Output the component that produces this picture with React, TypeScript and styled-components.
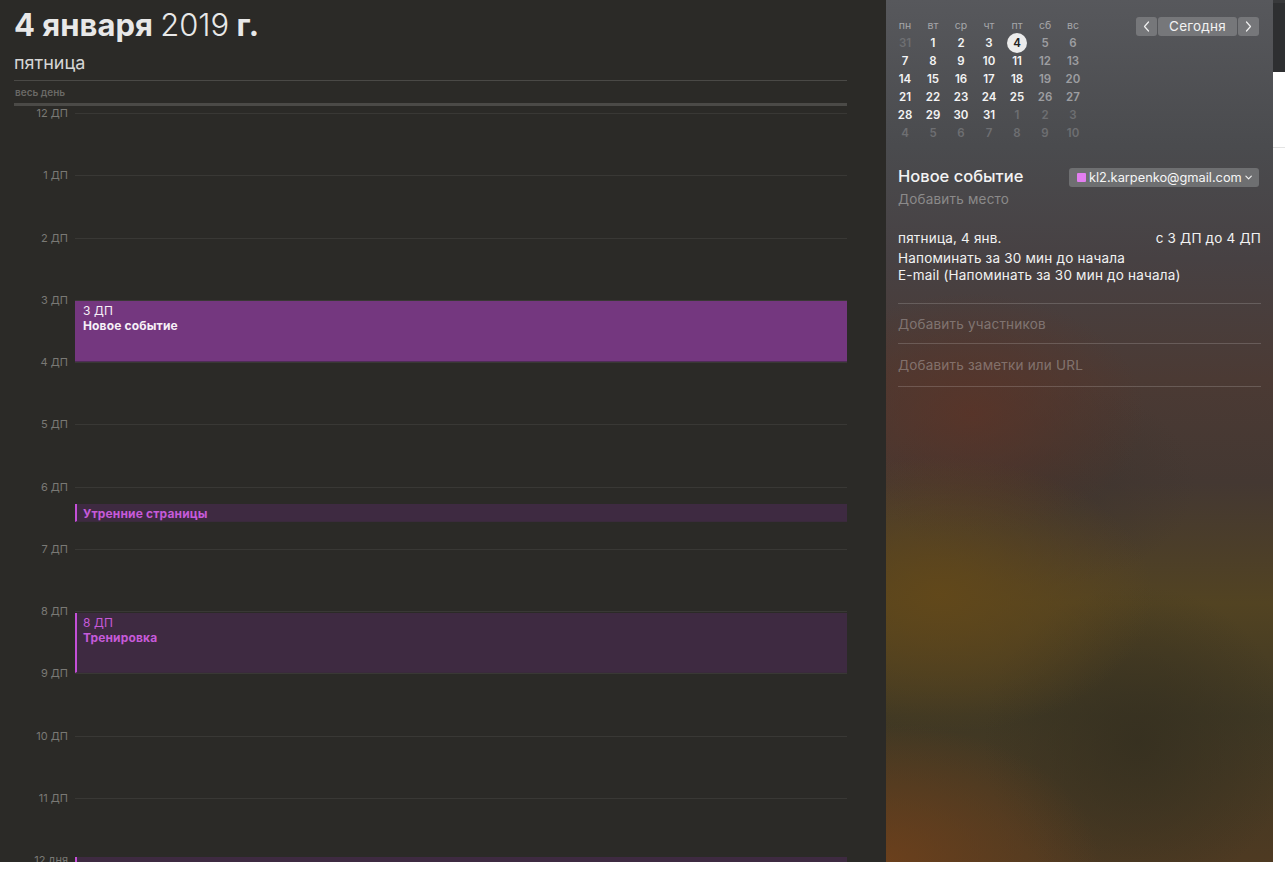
import React from "react";
import styled, { createGlobalStyle } from "styled-components";

const HOUR = 62.27;
const GRID_TOP = 7;

const GlobalStyle = createGlobalStyle`
  html, body { margin: 0; padding: 0; background: #ffffff; }
  body {
    font-family: Inter, "Noto Sans", "Liberation Sans", sans-serif;
    -webkit-font-smoothing: antialiased;
  }
  * { box-sizing: border-box; }
`;

const Window = styled.div`
  display: flex;
  width: 1285px;
  height: 862px;
  overflow: hidden;
`;

const DayPane = styled.section`
  flex: none;
  width: 886px;
  display: flex;
  flex-direction: column;
  padding-right: 39px;
  background: #2b2a27;
`;

const Header = styled.header`
  margin-left: 14px;
  padding: 7px 0 6px;
  border-bottom: 1px solid #4a4946;
`;

const Title = styled.h1`
  margin: 0;
  font-size: 31px;
  line-height: 36px;
  font-weight: 700;
  color: #e8e8e8;
`;

const TitleYear = styled.span`
  font-weight: 300;
`;

const Weekday = styled.div`
  margin-top: 9px;
  font-size: 18px;
  line-height: 22px;
  color: #d6d6d6;
`;

const AllDay = styled.div`
  margin-left: 14px;
  height: 25px;
  padding: 5px 0 0 1px;
  font-size: 10px;
  line-height: 12px;
  font-weight: 600;
  color: #6a6966;
  border-bottom: 3px solid #4b4a47;
`;

const Grid = styled.div`
  position: relative;
  flex: 1;
  min-height: 0;
  overflow: hidden;
  padding-top: ${GRID_TOP}px;
`;

const HourRow = styled.div`
  display: grid;
  grid-template-columns: 75px 1fr;
  height: ${HOUR}px;
`;

const HourLabel = styled.div`
  margin-top: -7px;
  padding-right: 7px;
  text-align: right;
  font-size: 11px;
  line-height: 14px;
  color: #7a7975;
`;

const HourLine = styled.div`
  border-top: 1px solid #393835;
`;

const EventLayer = styled.div`
  position: absolute;
  top: 0;
  bottom: 0;
  left: 75px;
  right: 0;
`;

const EventBlock = styled.div<{ $solid?: boolean }>`
  position: absolute;
  left: 0;
  right: 0;
  overflow: hidden;
  padding: 2px 8px 0 ${(p) => (p.$solid ? 8 : 6)}px;
  background: ${(p) => (p.$solid ? "#74377f" : "#3e2a41")};
  border-left: ${(p) => (p.$solid ? "none" : "2px solid #c44fd7")};
  border-bottom: 1px solid ${(p) => (p.$solid ? "#4f2d57" : "#3a2a3c")};
  color: ${(p) => (p.$solid ? "#f6f0f7" : "#c65ad9")};
  font-size: 12px;
  line-height: 15px;
  letter-spacing: 0.15px;
`;

const EventTime = styled.div`
  font-weight: 400;
`;

const EventName = styled.div<{ $inline?: boolean }>`
  font-weight: 700;
  line-height: ${(p) => (p.$inline ? "16px" : "15px")};
`;

const Sidebar = styled.aside`
  flex: none;
  width: 387px;
  padding: 16px 12px 0;
  color: #f0f0f0;
  background:
    radial-gradient(ellipse 55% 16% at 14% 69%, rgba(98, 72, 26, 0.95), rgba(98, 72, 26, 0)),
    radial-gradient(ellipse 55% 16% at 0% 100%, rgba(108, 64, 28, 0.95), rgba(108, 64, 28, 0)),
    radial-gradient(ellipse 45% 14% at 22% 48%, rgba(90, 52, 40, 0.85), rgba(90, 52, 40, 0)),
    radial-gradient(ellipse 40% 18% at 65% 86%, rgba(54, 48, 32, 0.9), rgba(54, 48, 32, 0)),
    radial-gradient(ellipse 40% 12% at 40% 56%, rgba(62, 52, 46, 0.8), rgba(62, 52, 46, 0)),
    linear-gradient(180deg, #57585c 0%, #4a4b4e 17%, #474143 30%, #4b3a34 44%, #443832 56%, #524322 70%, #3f3824 83%, #4e3a22 100%);
`;

const TopRow = styled.div`
  display: flex;
  align-items: flex-start;
`;

const MiniCal = styled.div`
  margin-left: -7px;
  display: grid;
  grid-template-columns: repeat(7, 28px);
  grid-auto-rows: 18px;
`;

const DayHead = styled.div`
  display: flex;
  align-items: center;
  justify-content: center;
  font-size: 10.5px;
  color: #a6a7aa;
`;

const DayCell = styled.div<{ $tone: "main" | "weekend" | "other"; $today?: boolean }>`
  display: flex;
  align-items: center;
  justify-content: center;
  font-size: 11.5px;
  font-weight: 600;
  color: ${(p) =>
    p.$today ? "#222222" : p.$tone === "main" ? "#f4f4f4" : p.$tone === "weekend" ? "#9d9ea1" : "#6e6f72"};

  span {
    display: flex;
    align-items: center;
    justify-content: center;
    width: 20px;
    height: 20px;
    border-radius: 50%;
    background: ${(p) => (p.$today ? "#ececec" : "transparent")};
  }
`;

const Nav = styled.div`
  display: flex;
  gap: 1px;
  margin: 1px 2px 0 auto;
`;

const NavButton = styled.button<{ $wide?: boolean }>`
  display: flex;
  align-items: center;
  justify-content: center;
  width: ${(p) => (p.$wide ? 79 : 21)}px;
  height: 19px;
  padding: 0;
  border: none;
  border-radius: 3px;
  background: #76777a;
  color: #f2f2f2;
  font-family: inherit;
  font-size: 13.5px;
  line-height: 19px;
  letter-spacing: 0.2px;
`;

const FormHead = styled.div`
  display: flex;
  align-items: center;
  margin-top: 26px;
  height: 19px;
`;

const EventTitle = styled.div`
  font-size: 16.5px;
  font-weight: 500;
  line-height: 19px;
  margin-top: -3px;
  color: #f3f3f3;
`;

const CalendarSelect = styled.div`
  display: flex;
  align-items: center;
  gap: 3px;
  width: 190px;
  height: 19px;
  margin: 0 2px 0 auto;
  padding: 0 7px 0 8px;
  border-radius: 3px;
  background: #6e6f71;
  font-size: 12.8px;
  color: #f5f5f5;
  white-space: nowrap;
`;

const Swatch = styled.span`
  flex: none;
  width: 9px;
  height: 9px;
  border-radius: 1px;
  background: #e27ef0;
`;

const SelectText = styled.span`
  flex: 1;
`;

const Body = styled.div`
  font-size: 13.5px;
  letter-spacing: 0.2px;
`;

const Muted = styled.div`
  line-height: 16px;
  color: #8b8a8a;
`;

const Placeholder = styled(Muted)`
  margin-top: 4px;
`;

const WhenRow = styled.div`
  display: flex;
  justify-content: space-between;
  margin-top: 23px;
  line-height: 16px;
  color: #f2f2f2;
`;

const Reminders = styled.div`
  margin-top: 4px;
  padding-bottom: 19px;
  line-height: 17px;
  color: #f2f2f2;
  border-bottom: 1px solid rgba(255, 255, 255, 0.17);
`;

const FieldRow = styled.div<{ $h: number }>`
  display: flex;
  align-items: center;
  height: ${(p) => p.$h}px;
  color: rgba(255, 255, 255, 0.3);
  border-bottom: 1px solid rgba(255, 255, 255, 0.17);
`;

const Strip = styled.div`
  flex: none;
  width: 12px;
  background: #ffffff;
`;

const StripBar = styled.div`
  height: 72px;
  background: #2e2f31;
  border-top: 3px solid #38393b;
`;

const StripRule = styled.div`
  margin-top: 75px;
  height: 1px;
  background: #e4e4e4;
`;

const hours = [
  "12 ДП", "1 ДП", "2 ДП", "3 ДП", "4 ДП", "5 ДП", "6 ДП", "7 ДП",
  "8 ДП", "9 ДП", "10 ДП", "11 ДП", "12 дня",
];

type Ev = { start: number; end: number; time?: string; name: string; solid?: boolean };

const events: Ev[] = [
  { start: 3, end: 4, time: "3 ДП", name: "Новое событие", solid: true },
  { start: 6.27, end: 6.575, name: "Утренние страницы" },
  { start: 8.02, end: 9, time: "8 ДП", name: "Тренировка" },
  { start: 11.93, end: 12.5, time: "11:55 ДП", name: "Обед" },
];

const weekHeads = ["пн", "вт", "ср", "чт", "пт", "сб", "вс"];

type Day = { n: number; tone: "main" | "weekend" | "other"; today?: boolean };

// 42 cells: Dec 31, then Jan 1..31, then Feb 1..10
const buildMonth = (): Day[] => {
  const days: Day[] = [{ n: 31, tone: "other" }];
  for (let i = 1; i < 42; i++) {
    const inMonth = i <= 31;
    const n = inMonth ? i : i - 31;
    const weekend = i % 7 >= 5;
    days.push({
      n,
      tone: !inMonth ? "other" : weekend ? "weekend" : "main",
      today: inMonth && n === 4,
    });
  }
  return days;
};

const Chevron = ({ dir }: { dir: "left" | "right" }) => (
  <svg width="7" height="11" viewBox="0 0 7 11" fill="none">
    <path
      d={dir === "left" ? "M5.5 1 L1.5 5.5 L5.5 10" : "M1.5 1 L5.5 5.5 L1.5 10"}
      stroke="#f0f0f0"
      strokeWidth="1.2"
      strokeLinecap="round"
      strokeLinejoin="round"
    />
  </svg>
);

const Caret = () => (
  <svg width="8" height="5" viewBox="0 0 8 5" fill="none">
    <path d="M1 1 L4 4 L7 1" stroke="#f0f0f0" strokeWidth="1.3" strokeLinecap="round" strokeLinejoin="round" />
  </svg>
);

const App = () => {
  const month = buildMonth();

  return (
    <>
      <GlobalStyle />
      <Window>
        <DayPane>
          <Header>
            <Title>
              4 января <TitleYear>2019</TitleYear> г.
            </Title>
            <Weekday>пятница</Weekday>
          </Header>
          <AllDay>весь день</AllDay>
          <Grid>
            {hours.map((h) => (
              <HourRow key={h}>
                <HourLabel>{h}</HourLabel>
                <HourLine />
              </HourRow>
            ))}
            <EventLayer>
              {events.map((ev) => {
                const top = GRID_TOP + ev.start * HOUR + 1;
                const height = (ev.end - ev.start) * HOUR - 1;
                return (
                  <EventBlock key={ev.name} $solid={ev.solid} style={{ top, height }}>
                    {ev.time ? <EventTime>{ev.time}</EventTime> : null}
                    <EventName $inline={!ev.time}>{ev.name}</EventName>
                  </EventBlock>
                );
              })}
            </EventLayer>
          </Grid>
        </DayPane>

        <Sidebar>
          <TopRow>
            <MiniCal>
              {weekHeads.map((d) => (
                <DayHead key={d}>{d}</DayHead>
              ))}
              {month.map((d, i) => (
                <DayCell key={i} $tone={d.tone} $today={d.today}>
                  <span>{d.n}</span>
                </DayCell>
              ))}
            </MiniCal>
            <Nav>
              <NavButton>
                <Chevron dir="left" />
              </NavButton>
              <NavButton $wide>Сегодня</NavButton>
              <NavButton>
                <Chevron dir="right" />
              </NavButton>
            </Nav>
          </TopRow>

          <FormHead>
            <EventTitle>Новое событие</EventTitle>
            <CalendarSelect>
              <Swatch />
              <SelectText>kl2.karpenko@gmail.com</SelectText>
              <Caret />
            </CalendarSelect>
          </FormHead>

          <Body>
            <Placeholder>Добавить место</Placeholder>
            <WhenRow>
              <span>пятница, 4 янв.</span>
              <span>с 3 ДП до 4 ДП</span>
            </WhenRow>
            <Reminders>
              <div>Напоминать за 30 мин до начала</div>
              <div>E-mail (Напоминать за 30 мин до начала)</div>
            </Reminders>
            <FieldRow $h={40}>Добавить участников</FieldRow>
            <FieldRow $h={43}>Добавить заметки или URL</FieldRow>
          </Body>
        </Sidebar>

        <Strip>
          <StripBar />
          <StripRule />
        </Strip>
      </Window>
    </>
  );
};

export default App;
